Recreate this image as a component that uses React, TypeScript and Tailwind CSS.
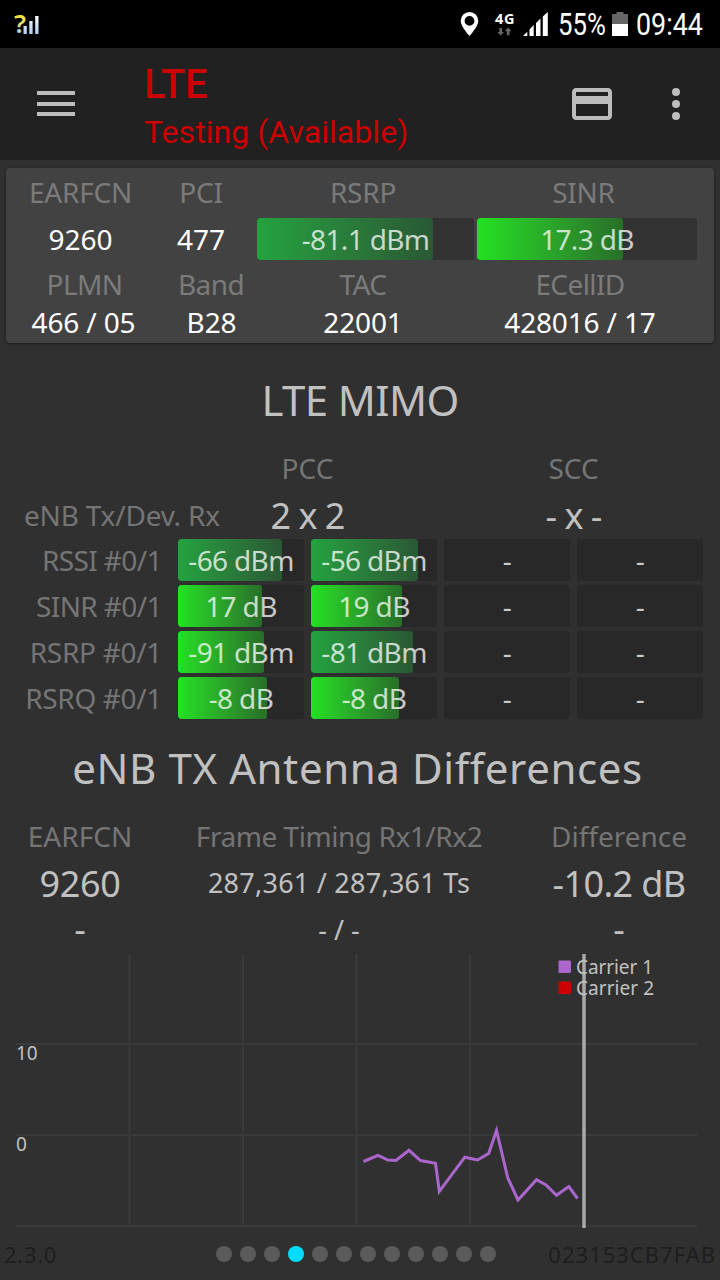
import React from 'react';
import clsx from 'clsx';

type Tone = 'lime' | 'green';

interface IMeterProps {
  value: string;
  percent?: number;
  tone?: Tone;
  card?: boolean;
  className?: string;
}

interface IMimoRow {
  label: string;
  tracking: string;
  cells: IMeterProps[];
}

const mimoRows: IMimoRow[] = [
  {
    label: 'RSSI #0/1',
    tracking: 'tracking-[-0.6px]',
    cells: [
      { value: '-66 dBm', percent: 82.3, tone: 'green' },
      { value: '-56 dBm', percent: 85, tone: 'green' },
      { value: '-' },
      { value: '-' },
    ],
  },
  {
    label: 'SINR #0/1',
    tracking: 'tracking-[-0.6px]',
    cells: [
      { value: '17 dB', percent: 66.5, tone: 'lime' },
      { value: '19 dB', percent: 72, tone: 'lime' },
      { value: '-' },
      { value: '-' },
    ],
  },
  {
    label: 'RSRP #0/1',
    tracking: 'tracking-[-0.3px]',
    cells: [
      { value: '-91 dBm', percent: 68, tone: 'lime' },
      { value: '-81 dBm', percent: 81, tone: 'green' },
      { value: '-' },
      { value: '-' },
    ],
  },
  {
    label: 'RSRQ #0/1',
    tracking: 'tracking-[-0.35px]',
    cells: [
      { value: '-8 dB', percent: 71, tone: 'lime' },
      { value: '-8 dB', percent: 69.5, tone: 'lime' },
      { value: '-' },
      { value: '-' },
    ],
  },
];

const carrierPoints =
  '363.5,1161.5 378,1155.3 388,1160 396,1160.5 409,1150.3 420.5,1160.6 435.5,1163.3 439.3,1191.5 464.8,1157.2 477.5,1160 488.7,1153.5 496.5,1130.5 507.8,1178 518,1200 536.5,1179.7 546,1185 556.5,1195.3 568.8,1186.5 577.5,1198.5';

function StatusBar() {
  return (
    <div className="flex h-12 items-center justify-between bg-black text-white">
      <svg width="48" height="48" viewBox="0 0 48 48">
        <defs>
          <linearGradient id="unknown" x1="0" y1="14" x2="0" y2="34" gradientUnits="userSpaceOnUse">
            <stop offset="0" stopColor="#f2e234" />
            <stop offset="0.45" stopColor="#e8e070" />
            <stop offset="1" stopColor="#a9cdf5" />
          </linearGradient>
          <linearGradient id="signal" x1="0" y1="16" x2="0" y2="34" gradientUnits="userSpaceOnUse">
            <stop offset="0" stopColor="#ffffff" />
            <stop offset="1" stopColor="#a9cdf5" />
          </linearGradient>
        </defs>
        <text x="14" y="33.3" fill="url(#unknown)" fontFamily="Noto Sans, sans-serif" fontWeight="600" fontSize="26">
          ?
        </text>
        <g fill="url(#signal)">
          <rect x="23.5" y="26" width="3.3" height="8" />
          <rect x="29.3" y="21" width="3.3" height="13" />
          <rect x="35.2" y="16" width="3.3" height="18" />
        </g>
      </svg>
      <div className="flex h-12 items-center">
        <svg width="98" height="48" viewBox="456 0 98 48">
          <path
            fill="#fff"
            fillRule="evenodd"
            d="M469.5 12a8.8 8.8 0 0 0-8.8 8.8c0 6 8.8 15.2 8.8 15.2s8.8-9.2 8.8-15.2a8.8 8.8 0 0 0-8.8-8.8zm0 4a4.9 4.9 0 1 1 0 9.8a4.9 4.9 0 0 1 0-9.8z"
          />
          <text x="495" y="24" fill="#fff" fontFamily="Noto Sans, sans-serif" fontWeight="700" fontSize="14.5" textLength="19.5">
            4G
          </text>
          <path
            fill="#666"
            d="M499.4 28h2.6v4h2l-3.3 3.6l-3.3-3.6h2zM508.2 27.5l3.3 3.8h-2v4h-2.6v-4h-2z"
          />
          <path
            fill="#fff"
            d="M523 36l4.3-4.3V36zM529.5 29.5l4.2-4.5V36h-4.2zM536 23l4.5-4.5V36h-4.5zM542.8 16.5l5-4.5V36h-5z"
          />
        </svg>
        <div className="w-[58px] pl-1">
          <span className="inline-block origin-left scale-x-[0.83] font-[Roboto,sans-serif] text-[31px]/[51px]">55%</span>
        </div>
        <svg width="16" height="24" viewBox="0 0 16 24">
          <path fill="#666" d="M0 12V2h4.5V0h7v2H16v10z" />
          <rect y="12" width="16" height="12" fill="#fff" />
        </svg>
        <div className="w-[92px] pl-2">
          <span className="inline-block origin-left scale-x-[0.865] font-[Roboto,sans-serif] text-[31px]/[51px]">09:44</span>
        </div>
      </div>
    </div>
  );
}

function Toolbar() {
  return (
    <header className="flex h-28 items-center bg-[#212121]">
      <button className="ml-[37px] flex w-[38px] flex-col gap-[6.5px] pb-px" type="button" aria-label="Menu">
        <span className="h-1 bg-[#bdbdbd]" />
        <span className="h-1 bg-[#bdbdbd]" />
        <span className="h-1 bg-[#bdbdbd]" />
      </button>
      <div className="ml-[69px] flex-1 pt-[9px] font-[Roboto,sans-serif] text-[#cc0000]">
        <h1 className="text-[40px]/[48px] font-medium">LTE</h1>
        <p className="text-[32px]/[47px] tracking-[0.05px]">Testing (Available)</p>
      </div>
      <svg width="48" height="48" viewBox="0 0 24 24" fill="#bdbdbd">
        <path d="M20 4H4c-1.11 0-1.99.89-1.99 2L2 18c0 1.11.89 2 2 2h16c1.11 0 2-.89 2-2V6c0-1.11-.89-2-2-2zm0 14H4v-6h16v6zm0-10H4V6h16v2z" />
      </svg>
      <svg className="mr-5 ml-9" width="48" height="48" viewBox="0 0 24 24" fill="#bdbdbd">
        <circle cx="12" cy="6" r="2" />
        <circle cx="12" cy="12" r="2" />
        <circle cx="12" cy="18" r="2" />
      </svg>
    </header>
  );
}

function Meter({ value, percent, tone, card, className }: IMeterProps) {
  return (
    <div
      className={clsx(
        'relative flex h-[42px] items-center justify-center overflow-hidden rounded-[3px]',
        card ? 'bg-[#323232]' : 'bg-[#282828]',
        className
      )}
    >
      {percent && (
        <div
          className={clsx(
            'absolute inset-y-0 left-0 rounded-[3px] bg-linear-to-r',
            tone === 'lime' && 'from-[#21e221] to-[#286f28]',
            tone === 'green' && 'from-[#22a33f] to-[#295934]'
          )}
          style={{ width: `${percent}%` }}
        />
      )}
      <span className="relative whitespace-nowrap text-[28px]/[42px] tracking-[-0.65px] text-white/75">{value}</span>
    </div>
  );
}

function ServingCell() {
  return (
    <section className="mx-1.5 mt-2 h-[175px] rounded-[4px] bg-[#424242] text-center text-[28px] text-white shadow-[0_1px_3px_rgba(0,0,0,0.5)]">
      <div className="grid h-[50px] grid-cols-[149px_92px_232px_209px] leading-[49px] tracking-[-0.25px] text-[#7b7b7b]">
        <span>EARFCN</span>
        <span>PCI</span>
        <span>RSRP</span>
        <span>SINR</span>
      </div>
      <div className="grid h-[42px] grid-cols-[149px_92px_10px_217px_3px_220px] leading-[42px]">
        <span>9260</span>
        <span>477</span>
        <Meter card value="-81.1 dBm" percent={81} tone="green" className="col-start-4" />
        <Meter card value="17.3 dB" percent={66.5} tone="lime" className="col-start-6" />
      </div>
      <div className="grid h-[44px] grid-cols-[157px_96px_208px_226px] leading-[49px] tracking-[-0.6px] text-[#7b7b7b]">
        <span>PLMN</span>
        <span>Band</span>
        <span>TAC</span>
        <span>ECellID</span>
      </div>
      <div className="grid h-[38px] grid-cols-[155px_101px_202px_232px] leading-[37px] tracking-[-0.15px]">
        <span>466 / 05</span>
        <span>B28</span>
        <span>22001</span>
        <span>428016 / 17</span>
      </div>
    </section>
  );
}

function Mimo() {
  return (
    <section>
      <h2 className="mt-[33px] h-[64px] text-center text-[42px]/[48px] tracking-[-0.6px]">LTE MIMO</h2>
      <div className="grid h-[50px] grid-cols-[178px_259px_7px_259px] text-center text-[28px]/[56px] text-[#757575]">
        <span className="col-start-2">PCC</span>
        <span className="col-start-4">SCC</span>
      </div>
      <div className="grid h-[49px] grid-cols-[178px_259px_7px_259px] text-center text-[36px]/[52px] tracking-[-1px]">
        <span className="whitespace-nowrap pl-6 text-left text-[28px]/[50px] tracking-[-0.2px] text-[#757575]">
          eNB Tx/Dev. Rx
        </span>
        <span>2 x 2</span>
        <span className="col-start-4">- x -</span>
      </div>
      <div className="flex flex-col gap-1">
        {mimoRows.map((row) => (
          <div key={row.label} className="grid grid-cols-[171px_126px_126px_126px_126px] gap-[7px]">
            <span className={clsx('pr-[9px] text-right text-[28px]/[42px] text-[#757575]', row.tracking)}>
              {row.label}
            </span>
            {row.cells.map((cell, index) => (
              <Meter key={index} {...cell} />
            ))}
          </div>
        ))}
      </div>
    </section>
  );
}

function AntennaDifferences() {
  return (
    <section className="text-center">
      <h2 className="mt-[25px] h-[68px] pr-[5px] text-[42px]/[48px] tracking-[0.6px]">eNB TX Antenna Differences</h2>
      <div className="grid h-[47px] grid-cols-[160px_358px_202px] text-[28px]/[48px] text-[#757575]">
        <span>EARFCN</span>
        <span className="tracking-[-0.45px]">Frame Timing Rx1/Rx2</span>
        <span>Difference</span>
      </div>
      <div className="grid h-[48px] grid-cols-[160px_358px_202px] text-[36px]/[50px] tracking-[-0.3px]">
        <span>9260</span>
        <span className="text-[27px]/[48px] tracking-[0.25px]">287,361 / 287,361 Ts</span>
        <span className="tracking-[-0.6px]">-10.2 dB</span>
      </div>
      <div className="grid h-[47px] grid-cols-[160px_358px_202px] text-[36px]/[44px]">
        <span>-</span>
        <span className="text-[27px]/[45px]">- / -</span>
        <span>-</span>
      </div>
    </section>
  );
}

function Chart() {
  return (
    <svg className="block" width="720" height="276" viewBox="0 954 720 276" fontFamily="Noto Sans, sans-serif" fontSize="19" fill="#c1c1c1">
      <g stroke="#3a3a3a" strokeWidth="2">
        {[129.5, 243, 356.5, 470].map((x) => (
          <line key={x} x1={x} x2={x} y1="954" y2="1227" />
        ))}
        {[1044, 1135, 1226].map((y) => (
          <line key={y} x1="16" x2="697" y1={y} y2={y} />
        ))}
      </g>
      <polyline points={carrierPoints} fill="none" stroke="#aa66cc" strokeWidth="3" />
      <line x1="584" x2="584" y1="953" y2="1228" stroke="#a9a9a9" strokeWidth="3.5" />
      <text x="16" y="1060">10</text>
      <text x="16" y="1151">0</text>
      <rect x="558.5" y="960.5" width="12.5" height="12.5" rx="1" fill="#aa66cc" />
      <rect x="558.5" y="981.5" width="12.5" height="12.5" rx="1" fill="#cc0000" />
      <text x="576" y="974" textLength="77">Carrier 1</text>
      <text x="576" y="995" textLength="78">Carrier 2</text>
    </svg>
  );
}

function Footer() {
  return (
    <footer className="flex h-12 items-center justify-between px-1 text-[22px] text-[#1e1e1e]">
      <span className="w-[212px] tracking-[0.7px]">2.3.0</span>
      <div className="flex gap-2">
        {Array.from({ length: 12 }, (_, index) => (
          <span key={index} className={clsx('size-4 rounded-full', index === 3 ? 'bg-[#00ddff]' : 'bg-[#5a5a5a]')} />
        ))}
      </div>
      <span className="w-[220px] text-right tracking-[1px]">023153CB7FAB</span>
    </footer>
  );
}

export default function App() {
  return (
    <div className="h-[1280px] w-[720px] overflow-hidden bg-[#303030] font-['Noto_Sans',sans-serif] text-[#c1c1c1]">
      <StatusBar />
      <Toolbar />
      <ServingCell />
      <Mimo />
      <AntennaDifferences />
      <Chart />
      <Footer />
    </div>
  );
}
